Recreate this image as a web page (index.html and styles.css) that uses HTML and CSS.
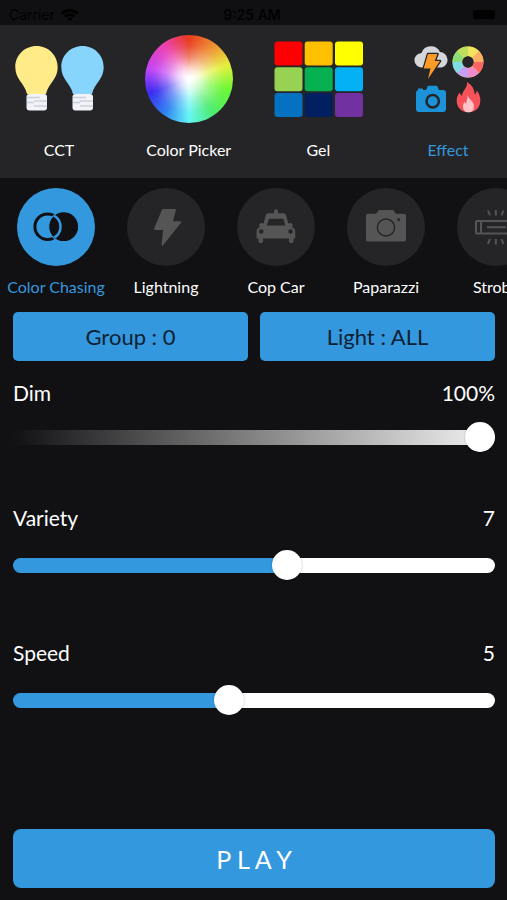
FILE: index.html
```html
<!DOCTYPE html>
<html lang="en">
   <head>
      <meta charset="UTF-8">
      <meta name="viewport" content="width=device-width, initial-scale=1">
      <title>Light Effects</title>
      <link rel="stylesheet" href="styles.css">
   </head>
   <body>
      <header class="status">
         <span class="carrier">Carrier
            <svg width="18" height="13" viewBox="0 0 18 13"><path d="M0 4.500a13 13 0 0 1 18 0l-2 2a10 10 0 0 0-14 0zM3.200 7.600a8.300 8.300 0 0 1 11.600 0l-2 2a5.400 5.400 0 0 0-7.600 0zM6.300 10.700a4 4 0 0 1 5.400 0L9 13z"/></svg>
         </span>
         <span class="time">9:25 AM</span>
         <span class="battery"><i></i></span>
      </header>

      <nav class="tabs">
         <button class="tab">
            <svg width="90" height="90" viewBox="0 0 90 90">
               <defs>
                  <path id="glass" d="M22.500 12C10.500 12 1.300 21.500 1.300 33c0 12.500 9 15.500 11.700 27h19c2.700-11.500 11.700-14.500 11.700-27 0-11.500-9.200-21-21.200-21z"/>
                  <g id="base">
                     <rect x="12.500" y="60" width="20.500" height="16.500" rx="3" fill="#f1f3f8"/>
                     <path d="M13 63.500h13M20 67h13M13 68.500h7M20 72h13" stroke="#cdd0da" stroke-width="1.500"/>
                  </g>
               </defs>
               <use href="#glass" fill="#ffeb87"/>
               <use href="#base"/>
               <use href="#glass" x="46" fill="#87d5fd"/>
               <use href="#base" x="46"/>
            </svg>
            CCT
         </button>
         <button class="tab">
            <span class="wheel"></span>
            Color Picker
         </button>
         <button class="tab">
            <svg width="90" height="90" viewBox="0 0 90 90">
               <rect x="1.500" y="7.500" width="28" height="24" rx="3" fill="#fe0000"/>
               <rect x="31.700" y="7.500" width="28" height="24" rx="3" fill="#ffc000"/>
               <rect x="62" y="7.500" width="28" height="24" rx="3" fill="#ffff00"/>
               <rect x="1.500" y="33.200" width="28" height="24" rx="3" fill="#97d252"/>
               <rect x="31.700" y="33.200" width="28" height="24" rx="3" fill="#06b050"/>
               <rect x="62" y="33.200" width="28" height="24" rx="3" fill="#03b0f3"/>
               <rect x="1.500" y="59" width="28" height="24" rx="3" fill="#0571c1"/>
               <rect x="31.700" y="59" width="28" height="24" rx="3" fill="#022060"/>
               <rect x="62" y="59" width="28" height="24" rx="3" fill="#7131a1"/>
            </svg>
            Gel
         </button>
         <button class="tab active">
            <svg width="90" height="90" viewBox="0 0 90 90">
               <!-- storm cloud -->
               <path d="M19 33.500a7.300 7.300 0 0 1-.500-14.600 10 10 0 0 1 18.500-.800 7.800 7.800 0 0 1 1.500 15.400z" fill="#d5d6da"/>
               <path d="M25 20h9.500l-2.800 7h5.300L25 45l2.500-10.500h-6.800z" fill="#fa9a27" stroke="#252527" stroke-width="2.600" paint-order="stroke" stroke-linejoin="round"/>
               <!-- colour ring -->
               <g fill="none" stroke-width="9.500">
                  <circle cx="65" cy="28" r="10.700" stroke="#f5dc64"/>
                  <path d="M65 17.300A10.700 10.700 0 0 1 72.600 20.400" stroke="#f2e45e"/>
                  <path d="M72.600 20.400A10.700 10.700 0 0 1 75.700 28" stroke="#ffae66"/>
                  <path d="M75.700 28A10.700 10.700 0 0 1 72.600 35.600" stroke="#ff6464"/>
                  <path d="M72.600 35.600A10.700 10.700 0 0 1 65 38.700" stroke="#f08ccb"/>
                  <path d="M65 38.700A10.700 10.700 0 0 1 57.400 35.600" stroke="#c5a0fa"/>
                  <path d="M57.400 35.600A10.700 10.700 0 0 1 54.300 28" stroke="#7edbe8"/>
                  <path d="M54.300 28A10.700 10.700 0 0 1 57.400 20.400" stroke="#8ddc78"/>
                  <path d="M57.400 20.400A10.700 10.700 0 0 1 65 17.300" stroke="#bce05b"/>
               </g>
               <!-- camera -->
               <path d="M16 56h7l2-4.300h9l2 4.300h4a3 3 0 0 1 3 3v16a3 3 0 0 1-3 3H16a3 3 0 0 1-3-3V59a3 3 0 0 1 3-3z" fill="#1c92d8"/>
               <path d="M15 54.500h5V56h-5z" fill="#1c92d8"/>
               <circle cx="29.700" cy="67.300" r="6.200" fill="none" stroke="#252527" stroke-width="2.500"/>
               <!-- flame -->
               <path d="M64 48c5 3 7.500 7 7.800 12.500 1.300-1 1.800-2.500 2-4 2.500 3 3.700 6.500 3.500 10.500-.300 7-5 11.300-11.800 11.300S53.700 73.500 53.700 67c0-3.500 1-6 2.800-8.500.5 1.500 1.200 2.500 2.300 3.200C59.500 56.500 64.500 54.500 64 48z" fill="#f7525a"/>
               <path d="M64.500 61c1 4 6.500 6 6.500 11.500 0 3.500-2.200 5.800-5.500 5.800s-5.500-2.300-5.500-5.800c0-2 .6-3.500 1.700-4.800.3 1 .8 1.600 1.500 2 .2-3 1.600-5 1.300-8.700z" fill="#ffc3c7"/>
            </svg>
            Effect
         </button>
      </nav>

      <section class="effects">
         <button class="effect active">
            <svg width="78" height="78" viewBox="0 0 78 78">
               <clipPath id="disc"><circle cx="46.700" cy="38.700" r="14.300"/></clipPath>
               <circle cx="30.700" cy="38.700" r="12.800" fill="none" stroke="#111113" stroke-width="3"/>
               <circle cx="46.700" cy="38.700" r="15" fill="#111113" stroke="#3498df" stroke-width="1.200"/>
               <circle cx="30.700" cy="38.700" r="12.800" fill="none" stroke="#3498df" stroke-width="2.500" clip-path="url(#disc)"/>
            </svg>
            Color Chasing
         </button>
         <button class="effect">
            <svg width="78" height="78" viewBox="0 0 78 78">
               <path d="M36 22h12l-3.500 12.300H53L35.500 56.500 37.300 41H28z" fill="#555" stroke="#555" stroke-width="2" stroke-linejoin="round"/>
            </svg>
            Lightning
         </button>
         <button class="effect">
            <svg width="78" height="78" viewBox="0 0 78 78">
               <path d="M37 25.300v-2a2 2 0 0 1 4 0v2h5.500q2 0 2.500 2l2.300 8.200 2.700-.5 2 2-1.200 2q3.500 1.500 3.500 4.500v7h-1.800v2.500a2.200 2.200 0 0 1-4.500 0v-2.500H26v2.500a2.200 2.200 0 0 1-4.500 0v-2.500h-2v-7q0-3 3.500-4.500l-1.200-2 2-2 2.700.5 2.300-8.200q.500-2 2.500-2z" fill="#555"/>
               <path d="M32 30.700h14.300l2 6.800H29.800z" fill="#252527"/>
               <circle cx="24.300" cy="43.500" r="2.200" fill="#252527"/>
               <circle cx="53.500" cy="43.500" r="2.200" fill="#252527"/>
            </svg>
            Cop Car
         </button>
         <button class="effect">
            <svg width="78" height="78" viewBox="0 0 78 78">
               <path d="M21 25.700h8l3-3.700h14l3 3.700h8a2 2 0 0 1 2 2v23.800a2 2 0 0 1-2 2H21a2 2 0 0 1-2-2V27.700a2 2 0 0 1 2-2z" fill="#555"/>
               <circle cx="39" cy="39.500" r="8.600" fill="none" stroke="#252527" stroke-width="1.500"/>
               <circle cx="51.700" cy="31.500" r="1.500" fill="#252527"/>
            </svg>
            Paparazzi
         </button>
         <button class="effect">
            <svg width="78" height="78" viewBox="0 0 78 78" fill="none" stroke="#555" stroke-width="2">
               <rect x="19" y="33" width="41" height="12.500" rx="1"/>
               <path d="M24 33v12.500M55 33v12.500M30 39.300h19M31 22.500l2 5M38.800 22v5.500M46.500 22.500l-2 5M31 56l2-5M38.800 56.500V51M46.500 56l-2-5"/>
            </svg>
            Strobe
         </button>
      </section>

      <main class="panel">
         <div class="targets">
            <button class="target">Group : 0</button>
            <button class="target">Light : ALL</button>
         </div>

         <div class="control control-dim">
            <div class="caption">
               <label for="dim">Dim</label>
               <output for="dim">100%</output>
            </div>
            <input class="slider slider-dim" id="dim" type="range" min="0" max="100" value="100">
         </div>
         <div class="control">
            <div class="caption">
               <label for="variety">Variety</label>
               <output for="variety">7</output>
            </div>
            <input class="slider" id="variety" type="range" min="0" max="1000" value="572" style="--fill: 57%">
         </div>
         <div class="control">
            <div class="caption">
               <label for="speed">Speed</label>
               <output for="speed">5</output>
            </div>
            <input class="slider" id="speed" type="range" min="0" max="1000" value="445" style="--fill: 45%">
         </div>

         <button class="play">P L A Y</button>
      </main>
   </body>
</html>
```
FILE: styles.css
```css
* {
  box-sizing: border-box;
}
body {
  font-family: Lato, "Liberation Sans", sans-serif;
  margin: 0;
  min-height: 100vh;
  display: flex;
  flex-direction: column;
  background-color: #111113;
  color: #fff;
}
button {
  font-family: inherit;
  color: inherit;
  background: none;
  border: none;
  padding: 0;
  cursor: pointer;
}
svg {
  display: block;
}

/* Status bar */
.status {
  display: grid;
  grid-template-columns: 1fr auto 1fr;
  align-items: center;
  height: 25px;
  padding: 3px 12px 0 9px;
  background-color: #101012;
  color: #010102;
  font-family: Inter, "Liberation Sans", sans-serif;
  font-size: 14px;
}
.carrier {
  display: flex;
  align-items: center;
  gap: 6px;
}
.time {
  font-weight: 600;
}
.battery {
  justify-self: end;
}
.battery i {
  display: block;
  width: 22px;
  height: 9px;
  border-radius: 2px;
  background-color: #010102;
}

/* Mode tabs */
.tabs {
  display: flex;
  justify-content: space-between;
  height: 153px;
  padding: 9px 14px 0;
  background-color: #252527;
}
.tab {
  width: 90px;
  display: flex;
  flex-direction: column;
  align-items: center;
  gap: 16px;
  font-size: 16px;
  line-height: 20px;
  white-space: nowrap;
}
.tab.active {
  color: #3498df;
}
.wheel {
  width: 88px;
  height: 88px;
  margin: 1px;
  border-radius: 50%;
  background:
    radial-gradient(circle closest-side, #fff 5%, rgba(255, 255, 255, 0.8) 22%, rgba(255, 255, 255, 0.35) 50%, rgba(255, 255, 255, 0.08) 75%, rgba(255, 255, 255, 0) 90%),
    conic-gradient(#e83c1e, #ee9a35 40deg, #e4f03c 70deg, #6cf734 105deg, #4cec70 145deg, #62f5f5 180deg, #2f83f2 215deg, #3a2cf0 250deg, #c445f5 285deg, #ee42b0 325deg, #e83c1e);
}

/* Effect list */
.effects {
  display: flex;
  padding: 10px 1px 0;
  overflow-x: auto;
  scrollbar-width: none;
}
.effect {
  flex: 0 0 110px;
  display: flex;
  flex-direction: column;
  align-items: center;
  gap: 11px;
  font-size: 16px;
  line-height: 20px;
  white-space: nowrap;
}
.effect svg {
  border-radius: 50%;
  background-color: #252527;
}
.effect.active {
  color: #3498df;
}
.effect.active svg {
  background-color: #3498df;
}

/* Sliders and buttons */
.panel {
  flex: 1;
  display: flex;
  flex-direction: column;
  padding: 15px 12px 12px 13px;
}
.targets {
  display: flex;
  gap: 12px;
  margin-bottom: 17px;
}
.target {
  flex: 1;
  height: 49px;
  border-radius: 5px;
  background-color: #3498df;
  color: #0c2233;
  font-size: 22px;
}
.control {
  display: flex;
  flex-direction: column;
  gap: 17px;
  margin-bottom: 58px;
}
.control-dim {
  gap: 14px;
  margin-bottom: 51px;
}
.caption {
  display: flex;
  justify-content: space-between;
  font-size: 21px;
  line-height: 30px;
}
.slider {
  -webkit-appearance: none;
  appearance: none;
  width: 100%;
  height: 30px;
  margin: 0;
  background: none;
}
.slider::-webkit-slider-runnable-track {
  height: 15px;
  border-radius: 8px;
  background: linear-gradient(to right, #3498df var(--fill), #fff var(--fill));
}
.slider-dim::-webkit-slider-runnable-track {
  border-radius: 0 8px 8px 0;
  background: linear-gradient(to right, #111113, #f4f4f4);
}
.slider::-webkit-slider-thumb {
  -webkit-appearance: none;
  width: 30px;
  height: 30px;
  margin-top: -8px;
  border-radius: 50%;
  background-color: #fff;
  box-shadow: 0 0 2px rgba(0, 0, 0, 0.3);
}
.play {
  height: 59px;
  margin-top: auto;
  border-radius: 8px;
  background-color: #3498df;
  color: #fff;
  font-size: 25px;
}
```
